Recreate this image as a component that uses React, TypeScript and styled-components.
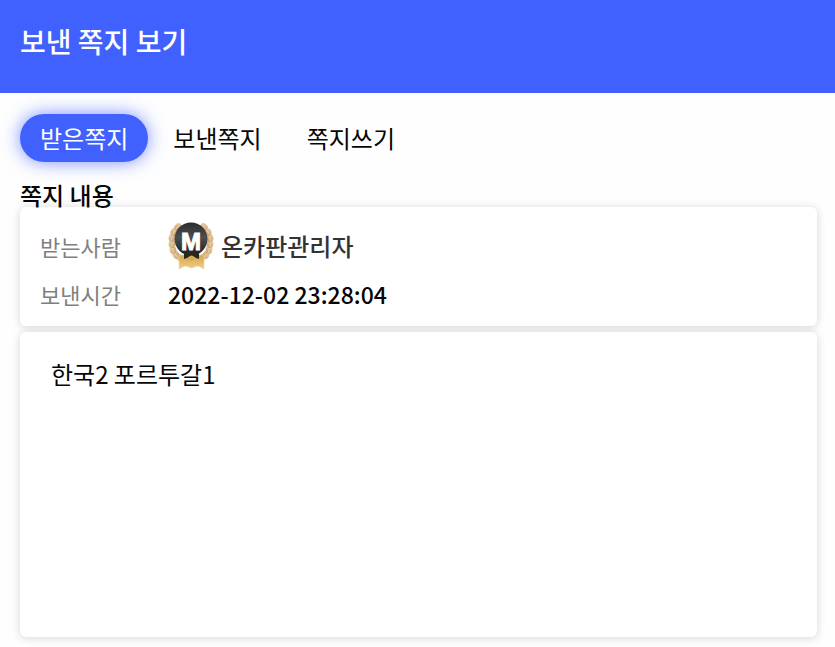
import { createGlobalStyle, styled } from "styled-components";

const colors = {
  primary: "#4161ff",
  white: "#ffffff",
  background: "#fefefe",
  black: "#060606",
  gray700: "#333333",
  gray400: "#808080",
};

const tabs = [
  { id: "received", label: "받은쪽지" },
  { id: "sent", label: "보낸쪽지" },
  { id: "write", label: "쪽지쓰기" },
];

const message = {
  receiver: "온카판관리자",
  sentAt: "2022-12-02 23:28:04",
  content: "한국2 포르투갈1",
};

// 한쪽 잎의 위치와 기울기
const leaves = [
  { x: 12, y: 36, rotate: 48 },
  { x: 8, y: 33, rotate: 30 },
  { x: 5, y: 28, rotate: 12 },
  { x: 4, y: 22, rotate: -4 },
  { x: 4, y: 16, rotate: -16 },
  { x: 6, y: 10, rotate: -30 },
  { x: 10, y: 5, rotate: -50 },
];

const Laurel = () => (
  <>
    {leaves.map(({ x, y, rotate }) => (
      <g key={y} transform={`translate(${x} ${y}) rotate(${-rotate})`}>
        <ellipse rx="3.4" ry="4" fill="url(#leaf)" />
        <path d="M0 -3v6" stroke="#f3dfbd" strokeWidth="0.6" />
      </g>
    ))}
  </>
);

const MasterBadge = () => (
  <Badge viewBox="0 0 48 48" role="img" aria-label="관리자">
    <defs>
      <linearGradient id="leaf" x1="0" y1="0" x2="1" y2="1">
        <stop offset="0" stopColor="#ecd3ac" />
        <stop offset="1" stopColor="#c39a66" />
      </linearGradient>
      <linearGradient id="medal" x1="0" y1="0" x2="0" y2="1">
        <stop offset="0" stopColor="#2a2c2e" />
        <stop offset="0.45" stopColor="#4b4e51" />
        <stop offset="1" stopColor="#1d1e20" />
      </linearGradient>
      <linearGradient id="ribbon" x1="0" y1="0" x2="0" y2="1">
        <stop offset="0" stopColor="#d3a656" />
        <stop offset="1" stopColor="#f1cf80" />
      </linearGradient>
    </defs>
    <Laurel />
    <g transform="translate(46 0) scale(-1 1)">
      <Laurel />
    </g>
    <path
      d="M11 33h25v14l-6-3-6.5 2-6.5-2-6 3z"
      fill="url(#ribbon)"
      stroke="#f3db9f"
      strokeWidth="0.6"
    />
    <circle cx="23" cy="17" r="16.5" fill="url(#medal)" />
    <path d="M16 31h15v6l-3-1-4.5-3-4.5 3-3 1z" fill="#2b2419" />
    <path d="M20 37l3.5-3 3.5 3-3.5 2z" fill="#d9a94e" />
    <BadgeLetter x="23" y="28" textAnchor="middle">
      M
    </BadgeLetter>
  </Badge>
);

const App = () => {
  return (
    <>
      <GlobalStyle />
      <Header>
        <Title>보낸 쪽지 보기</Title>
      </Header>
      <Container>
        <Tabs aria-label="쪽지함">
          {tabs.map(({ id, label }) => (
            <Tab
              key={id}
              href={`#${id}`}
              $activated={id === "received"}
              aria-current={id === "received" ? "page" : undefined}
            >
              {label}
            </Tab>
          ))}
        </Tabs>
        <SectionTitle>쪽지 내용</SectionTitle>
        <InfoCard>
          <InfoRow>
            <Label>받는사람</Label>
            <Receiver>
              <MasterBadge />
              {message.receiver}
            </Receiver>
          </InfoRow>
          <InfoRow>
            <Label>보낸시간</Label>
            <SentAt>{message.sentAt}</SentAt>
          </InfoRow>
        </InfoCard>
        <ContentCard>{message.content}</ContentCard>
      </Container>
    </>
  );
};

const GlobalStyle = createGlobalStyle`
  * {
    box-sizing: border-box;
    margin: 0;
  }

  body {
    background-color: ${colors.background};
    color: ${colors.black};

    font-family: "Noto Sans CJK KR", sans-serif;
    font-size: 24px;
    line-height: 36px;
  }
`;

const Header = styled.header`
  padding: 23px 20px 34px;

  background-color: ${colors.primary};
`;

const Title = styled.h1`
  color: ${colors.white};

  font-size: 28px;
  font-weight: 500;
  line-height: 36px;
`;

const Container = styled.main`
  padding: 21px 18px 10px 20px;
`;

const Tabs = styled.nav`
  display: flex;
  gap: 5px;
`;

const Tab = styled.a<{ $activated: boolean }>`
  padding: 6px 20px;

  border-radius: 24px;

  background-color: ${({ $activated }) =>
    $activated ? colors.primary : "transparent"};
  box-shadow: ${({ $activated }) =>
    $activated ? `0 0 18px ${colors.primary}b3` : "none"};

  color: ${({ $activated }) => ($activated ? colors.white : colors.black)};
  text-decoration: none;
`;

const SectionTitle = styled.h2`
  margin-top: 21px;

  font-size: 24px;
  font-weight: 500;
  line-height: 24px;
`;

const Card = styled.div`
  border-radius: 6px;

  background-color: ${colors.white};
  box-shadow: 0 1px 10px rgba(0, 0, 0, 0.16);
`;

const InfoCard = styled(Card).attrs({ as: "dl" })`
  padding: 15px 20px 8px;
`;

const InfoRow = styled.div`
  display: grid;
  grid-template-columns: 128px 1fr;
  align-items: center;

  min-height: 48px;
`;

const Label = styled.dt`
  color: ${colors.gray400};

  font-size: 22px;
`;

const Receiver = styled.dd`
  display: flex;
  align-items: center;
  gap: 5px;

  color: ${colors.gray700};

  font-weight: 500;
`;

const SentAt = styled.dd`
  font-size: 23px;
  font-weight: 500;
`;

const ContentCard = styled(Card)`
  margin-top: 6px;
  padding: 24px 31px;

  min-height: 305px;
`;

const Badge = styled.svg`
  flex-shrink: 0;

  width: 48px;
  height: 48px;
`;

const BadgeLetter = styled.text`
  fill: ${colors.white};
  stroke: ${colors.white};
  stroke-width: 1px;

  font-family: "Liberation Sans", sans-serif;
  font-size: 24px;
  font-weight: 700;
`;

export default App;
